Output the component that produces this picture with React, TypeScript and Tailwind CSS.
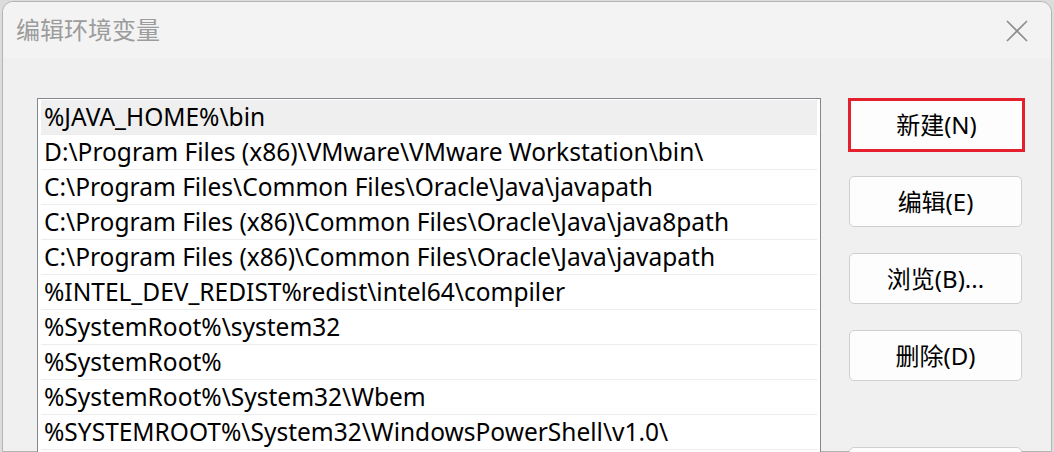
const paths = [
  '%JAVA_HOME%\\bin',
  'D:\\Program Files (x86)\\VMware\\VMware Workstation\\bin\\',
  'C:\\Program Files\\Common Files\\Oracle\\Java\\javapath',
  'C:\\Program Files (x86)\\Common Files\\Oracle\\Java\\java8path',
  'C:\\Program Files (x86)\\Common Files\\Oracle\\Java\\javapath',
  '%INTEL_DEV_REDIST%redist\\intel64\\compiler',
  '%SystemRoot%\\system32',
  '%SystemRoot%',
  '%SystemRoot%\\System32\\Wbem',
  '%SYSTEMROOT%\\System32\\WindowsPowerShell\\v1.0\\',
];

const font = "font-['Noto_Sans','Noto_Sans_CJK_SC',sans-serif]";

function DialogButton({ label }: { label?: string }) {
  return (
    <div className="flex h-[51px] w-[173px] items-center justify-center rounded-[5px] border border-[#cfcfcf] bg-[#fdfdfd] text-[24px] text-black">
      {label}
    </div>
  );
}

export default function App() {
  return (
    <div className={`flex h-[452px] w-[1054px] overflow-hidden bg-[#dcdcdc] ${font}`}>
      <div className="mt-[1px] ml-[2px] flex w-[1050px] flex-col rounded-t-[11px] border border-[#b4b4b4] bg-[#f0f0f0]">
        <div className="flex h-[56px] shrink-0 items-center justify-between rounded-t-[11px] bg-[#f3f3f3] pl-[13px] pr-[22px]">
          <span className="text-[24px] text-[#9c9c9c]">编辑环境变量</span>
          {/* close glyph */}
          <svg width="22" height="22" viewBox="0 0 22 22" className="mr-[1px] mt-[1px]">
            <path d="M1 1 L21 21 M21 1 L1 21" stroke="#8c8c8c" strokeWidth="1.6" fill="none" />
          </svg>
        </div>

        <div className="flex pl-[34px] pt-[40px]">
          <div className="w-[784px] shrink-0 border border-[#828790] bg-white px-[3px] pt-[1px]">
            {paths.map((p, i) => (
              <div
                key={p}
                className={`flex h-[35px] items-center whitespace-nowrap border-b border-[#ececec] px-[3px] text-[24.5px] leading-none text-black ${
                  i === 0 ? 'bg-[#efefef]' : ''
                }`}
              >
                {p}
              </div>
            ))}
          </div>

          <div className="ml-[28px] flex flex-col">
            <div className="ml-[-1px] flex h-[54px] w-[177px] items-center justify-center border-[3px] border-[#e5202e] bg-[#fdfdfd] text-[24px] text-black">
              新建(N)
            </div>
            <div className="mt-[24px] flex flex-col gap-[26px]">
              <DialogButton label="编辑(E)" />
              <DialogButton label="浏览(B)..." />
              <DialogButton label="删除(D)" />
            </div>
            {/* move-up button, below the fold */}
            <div className="mt-[66px]">
              <DialogButton />
            </div>
          </div>
        </div>
      </div>
    </div>
  );
}
